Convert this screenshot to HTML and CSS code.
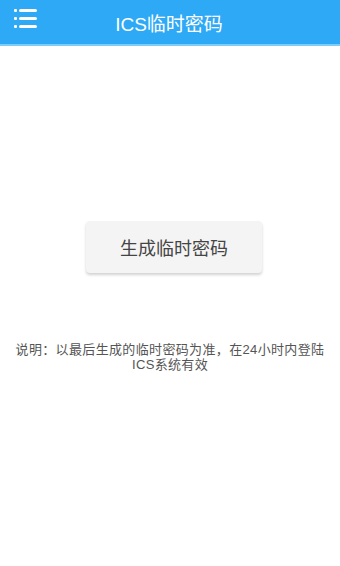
FILE: index.html
```html
<!DOCTYPE html>
<html>
<head>
<meta charset="utf-8">
<link rel="stylesheet" href="styles.css">
</head>
<body>
<div class="app">
  <header class="topbar">
    <svg class="menu" width="26" height="22" viewBox="0 0 26 22">
      <rect x="1" y="2" width="3" height="3" rx="1" fill="#fff"/>
      <rect x="1" y="10" width="3" height="3" rx="1" fill="#fff"/>
      <rect x="1" y="18" width="3" height="3" rx="1" fill="#fff"/>
      <rect x="6" y="2" width="18" height="3" rx="1.5" fill="#fff"/>
      <rect x="6" y="10" width="18" height="3" rx="1.5" fill="#fff"/>
      <rect x="6" y="18" width="18" height="3" rx="1.5" fill="#fff"/>
    </svg>
    <div class="title">ICS临时密码</div>
  </header>
  <main class="content">
    <button class="gen">生成临时密码</button>
    <p class="note">说明：以最后生成的临时密码为准，在24小时内登陆<br>ICS系统有效</p>
  </main>
</div>
</body>
</html>
```
FILE: styles.css
```css
html, body { margin: 0; padding: 0; background: #fff; }
body { font-family: "Liberation Sans", "Noto Sans CJK SC", sans-serif; width: 340px; height: 566px; overflow: hidden; }
.app { display: flex; flex-direction: column; height: 566px; }
.topbar {
  position: relative;
  height: 44px;
  background: #2ea9f6;
  border-bottom: 2px solid #7dccfa;
  display: flex;
  align-items: center;
  justify-content: center;
}
.menu { position: absolute; left: 13px; top: 7px; }
.title { color: #fff; font-size: 19px; margin-left: -2px; }
.content { display: flex; flex-direction: column; align-items: center; }
.gen {
  margin-top: 175px;
  margin-left: 8px;
  width: 176px;
  height: 52px;
  border: none;
  border-radius: 4px;
  background: #f4f4f4;
  box-shadow: 0 2px 3px rgba(0,0,0,0.18);
  color: #444;
  font-family: inherit;
  font-size: 18px;
  padding: 0;
}
.note {
  margin: 69px 0 0;
  text-align: center;
  color: #555;
  font-size: 13px;
  line-height: 15px;
  letter-spacing: 0.35px;
}
```
